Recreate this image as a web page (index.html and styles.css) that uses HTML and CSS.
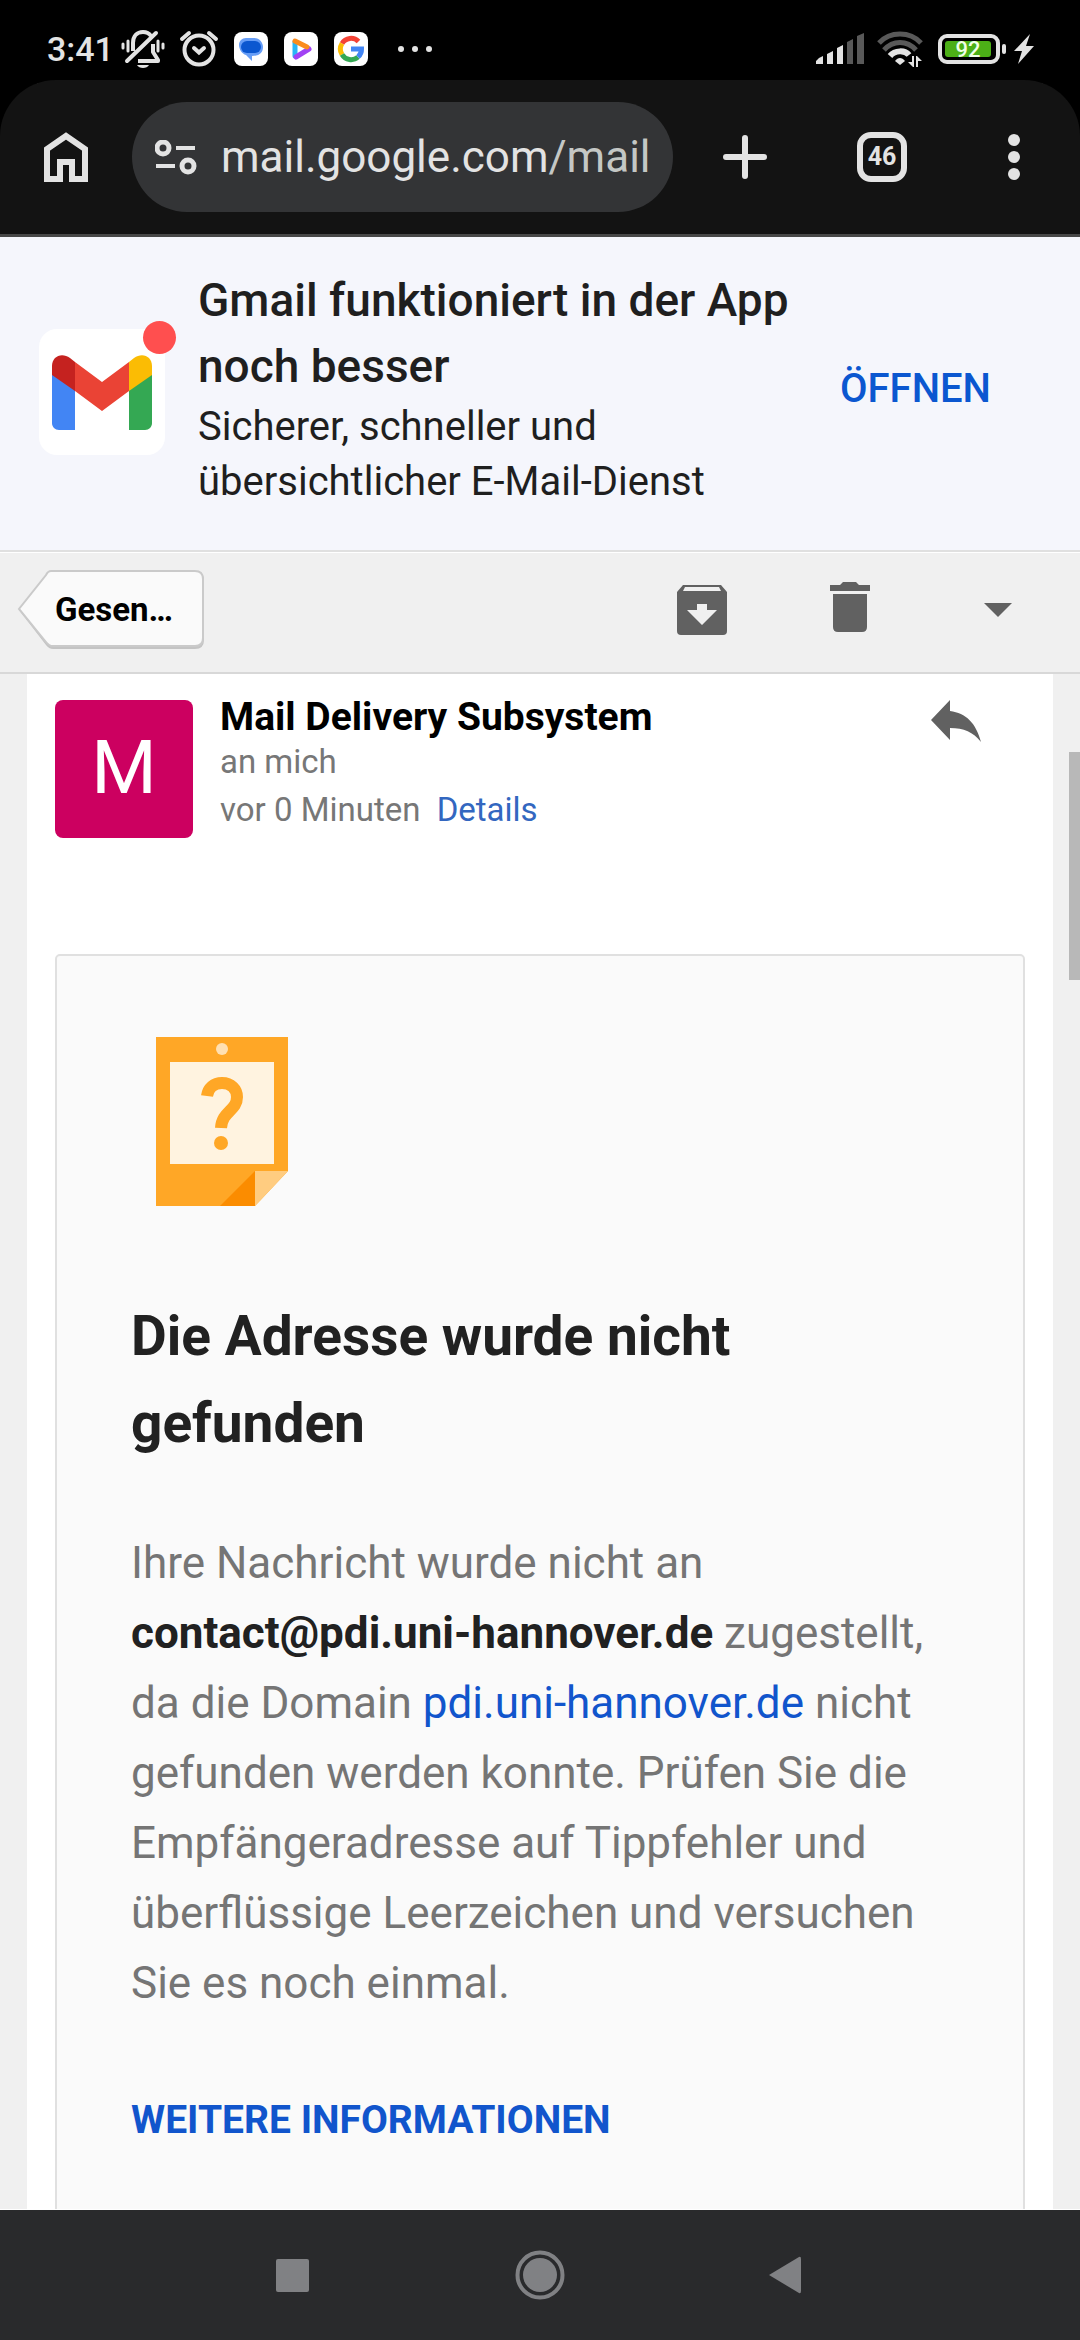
FILE: index.html
```html
<!doctype html>
<html lang="de">
    <head>
        <meta charset="UTF-8" />
        <meta name="viewport" content="width=device-width, initial-scale=1.0" />
        <title>Gmail - Die Adresse wurde nicht gefunden</title>
        <link rel="stylesheet" href="styles.css">
    </head>
    <body>
        <header class="status-bar">
            <span class="clock">3:41</span>
            <svg class="icon-bell" viewBox="0 0 44 38">
                <g fill="none" stroke="#e3e3e3" stroke-width="4">
                    <path d="M12 21 V13 C12 6 16 2 22 2 C25 2 28 3 30 6 M32 14 V22 L37 30 V31 H17" stroke-linejoin="round" />
                    <path d="M35 3 L6 31" stroke-linecap="round" />
                    <path d="M2 14 V18 M7 11 V21 M37 11 V21 M42 14 V18" stroke-width="3" stroke-linecap="round" />
                </g>
                <path d="M16 35 H28 C26 39 18 39 16 35Z" fill="#e3e3e3" />
            </svg>
            <svg class="icon-alarm" viewBox="0 0 40 38">
                <g fill="none" stroke="#e3e3e3" stroke-width="4" stroke-linecap="round">
                    <circle cx="20" cy="20" r="14.500" />
                    <path d="M3 9 L10 3 M37 9 L30 3 M15 18 L20 22.500 L25 18" />
                </g>
            </svg>
            <svg class="app-icon" viewBox="0 0 34 34">
                <rect width="34" height="34" rx="8" fill="#fff" />
                <path d="M12 6 H20 C26 6 29 11 29 15 C29 20 26 24 18 24 V29 L12 23 C8 22 5 17 5 13 C5 9 8 6 12 6Z" fill="#669df6" />
                <rect x="7" y="9" width="20" height="12" rx="6" fill="#0b57d0" />
            </svg>
            <svg class="app-icon" viewBox="0 0 34 34">
                <rect width="34" height="34" rx="8" fill="#fff" />
                <g fill="none" stroke-width="5" stroke-linecap="round">
                    <path d="M11 10 V24" stroke="#29b6f6" />
                    <path d="M12 25 L25 17" stroke="#a142f4" />
                    <path d="M11 9 L23 15" stroke="#fb8c1c" />
                </g>
            </svg>
            <svg class="app-icon" viewBox="0 0 34 34">
                <rect width="34" height="34" rx="8" fill="#fff" />
                <g fill="none" stroke-width="5">
                    <path d="M24.500 9.500 A10.500 10.500 0 0 0 8 11.500" stroke="#f44336" />
                    <path d="M8 11.500 A10.500 10.500 0 0 0 8 22.500" stroke="#fbbc04" />
                    <path d="M8 22.500 A10.500 10.500 0 0 0 24 25" stroke="#34a853" />
                    <path d="M24 25 A10.500 10.500 0 0 0 27.500 17 H17" stroke="#4285f4" />
                </g>
            </svg>
            <svg class="icon-more" viewBox="0 0 34 8" fill="#e3e3e3">
                <circle cx="3" cy="4" r="3" /><circle cx="17" cy="4" r="3" /><circle cx="31" cy="4" r="3" />
            </svg>
            <div class="status-right">
                <svg class="icon-signal" viewBox="0 0 48 32">
                    <path d="M0 31 V28 L3 25 L7 23 V31Z M11 31 V21 L17 18 V31Z M21 31 V15 L27 12 V31Z" fill="#e3e3e3" />
                    <path d="M31 31 V9 L37 6 V31Z M41 31 V3 L48 0 V31Z" fill="#595959" />
                </svg>
                <svg class="icon-wifi" viewBox="0 0 46 36">
                    <g fill="none" stroke-width="5">
                        <path d="M2 12 C13 0 33 0 44 12 M7 19 C16 9 30 9 39 19" stroke="#595959" />
                        <path d="M13 25 C18 19 28 19 32 24" stroke="#e3e3e3" stroke-width="6" />
                    </g>
                    <path d="M18 30 C21 26 25 26 28 30 L23 34Z M31 31 H35 V25 H37 V36 H36Z M39 36 V25 H40 L45 30 H41 V36Z" fill="#e3e3e3" />
                </svg>
                <div class="battery"><span class="battery-level">92</span></div>
                <svg class="icon-bolt" viewBox="0 0 20 30"><path d="M16 0 L0 17 H8 L4 30 L20 12 H12Z" fill="#e3e3e3" /></svg>
            </div>
        </header>

        <nav class="browser-bar">
            <button class="bar-button" aria-label="Startseite">
                <svg class="icon-home" viewBox="0 0 44 50">
                    <path d="M3 47 V17 L22 4 L41 17 V47 H28 V30 H16 V47Z" fill="none" stroke="#e3e3e3" stroke-width="6" />
                </svg>
            </button>
            <a class="url" href="#">
                <svg class="icon-tune" viewBox="0 0 42 35">
                    <g fill="none" stroke="#e3e3e3" stroke-width="5">
                        <circle cx="8" cy="8" r="6" /><circle cx="33" cy="26" r="6" />
                        <path d="M21 8 H40 M1 26 H20" stroke-width="4" />
                    </g>
                </svg>
                <span>mail.google.com<span class="url-path">/mail</span></span>
            </a>
            <button class="bar-button" aria-label="Neuer Tab">
                <svg class="icon-plus" viewBox="0 0 44 44">
                    <path d="M22 3 V41 M3 22 H41" stroke="#e3e3e3" stroke-width="6" stroke-linecap="round" />
                </svg>
            </button>
            <button class="bar-button"><span class="tab-count">46</span></button>
            <button class="bar-button" aria-label="Menü">
                <svg class="icon-menu" viewBox="0 0 12 46" fill="#e3e3e3">
                    <circle cx="6" cy="6" r="6" /><circle cx="6" cy="23" r="6" /><circle cx="6" cy="40" r="6" />
                </svg>
            </button>
        </nav>

        <section class="app-banner">
            <div class="gmail-icon">
                <svg class="gmail-logo" viewBox="0 0 100 75">
                    <path d="M0 18 L23 35 V75 H7 C3 75 0 72 0 68Z" fill="#4285f4" />
                    <path d="M100 18 L77 35 V75 H93 C97 75 100 72 100 68Z" fill="#34a853" />
                    <path d="M23 7 L50 27 L77 7 V36 L50 56 L23 36Z" fill="#ea4335" />
                    <path d="M0 20 V11 C0 1 10 -3 18 3 L23 7 V36Z" fill="#c5221f" />
                    <path d="M100 20 V11 C100 1 90 -3 82 3 L77 7 V36Z" fill="#fbbc04" />
                </svg>
                <span class="badge"></span>
            </div>
            <div class="banner-text">
                <h2>Gmail funktioniert in der App noch besser</h2>
                <p>Sicherer, schneller und übersichtlicher E-Mail-Dienst</p>
            </div>
            <a class="open-link" href="#">ÖFFNEN</a>
        </section>

        <div class="mail-bar">
            <button class="back-button">
                <svg class="back-shape" viewBox="0 0 188 82">
                    <path d="M34 3 H178 Q187 3 187 11 V71 Q187 80 178 80 H36 Q32 80 29 76 L2 41 L29 7 Q31 3 34 3Z" fill="#c4c4c4" />
                    <path d="M34 2 H178 Q186 2 186 10 V69 Q186 77 178 77 H36 Q32 77 29 73 L2 40 L29 6 Q31 2 34 2Z" fill="#fafafa" stroke="#cacaca" stroke-width="2" />
                </svg>
                <span class="back-label">Gesen…</span>
            </button>
            <button class="mail-action" aria-label="Archivieren">
                <svg class="icon-archive" viewBox="0 0 50 50">
                    <path d="M6 0 H44 L50 7 V46 Q50 50 46 50 H4 Q0 50 0 46 V7Z" fill="#616161" />
                    <path d="M8 2 H42 L44 6 H6Z M20 19 H30 V25 H40 L25 40 L10 25 H20Z" fill="#f0f0f0" />
                </svg>
            </button>
            <button class="mail-action" aria-label="Löschen">
                <svg class="icon-trash" viewBox="0 0 40 56">
                    <path d="M0 3 H10 L13 0 H26 L29 3 H40 V9 H0Z M3 12 H37 V45 Q37 50 32 50 H8 Q3 50 3 45Z" fill="#616161" />
                </svg>
            </button>
            <button class="mail-action" aria-label="Mehr">
                <svg class="icon-caret" viewBox="0 0 28 14"><path d="M0 0 H28 L14 14Z" fill="#616161" /></svg>
            </button>
        </div>

        <main class="message">
            <div class="message-page">
                <div class="sender">
                    <div class="avatar">M</div>
                    <div class="sender-info">
                        <h3>Mail Delivery Subsystem</h3>
                        <p class="recipient">an mich</p>
                        <p class="sent">vor 0 Minuten <a class="details" href="#">Details</a></p>
                    </div>
                    <button class="reply" aria-label="Antworten">
                        <svg class="icon-reply" viewBox="0 0 50 42">
                            <path d="M0 20 L19 0 V11 C35 13 45 23 50 42 C42 32 33 28 19 28 V40Z" fill="#616161" />
                        </svg>
                    </button>
                </div>

                <article class="card">
                    <svg class="icon-note" viewBox="0 0 132 169">
                        <path d="M0 0 H132 V134 L99 169 H0Z" fill="#ffa726" />
                        <circle cx="66" cy="12" r="6" fill="#ffe0b2" />
                        <rect x="14" y="25" width="104" height="102" fill="#fff3e0" />
                        <path d="M51 59 C52 51 58 46 66 46 C75 46 81 52 81 60 C81 74 66 74 65 91" fill="none" stroke="#ffa726" stroke-width="12" />
                        <circle cx="65" cy="106" r="7" fill="#ffa726" />
                        <path d="M64 169 L99 134 V169Z" fill="#fb8c00" />
                        <path d="M99 134 H132 L99 169Z" fill="#ffcc80" />
                    </svg>
                    <h1>Die Adresse wurde nicht gefunden</h1>
                    <p class="body-text">Ihre Nachricht wurde nicht an <strong>contact@pdi.uni-hannover.de</strong> zugestellt, da die Domain <a href="#">pdi.uni-hannover.de</a> nicht gefunden werden konnte. Prüfen Sie die Empfängeradresse auf Tippfehler und überflüssige Leerzeichen und versuchen Sie es noch einmal.</p>
                    <a class="more-info" href="#">WEITERE INFORMATIONEN</a>
                </article>
            </div>
            <span class="scroll-thumb"></span>
        </main>

        <footer class="nav-bar">
            <button class="nav-button" aria-label="Letzte Apps">
                <svg class="nav-icon" viewBox="0 0 50 50"><rect x="9" y="9" width="33" height="33" rx="2" fill="#808184" /></svg>
            </button>
            <button class="nav-button" aria-label="Home">
                <svg class="nav-icon" viewBox="0 0 50 50">
                    <circle cx="25" cy="25" r="22.500" fill="none" stroke="#808184" stroke-width="4" />
                    <circle cx="25" cy="25" r="17" fill="#808184" />
                </svg>
            </button>
            <button class="nav-button" aria-label="Zurück">
                <svg class="nav-icon" viewBox="0 0 50 50"><path d="M6 25 L36 7 Q38 6 38 9 V41 Q38 44 36 43Z" fill="#808184" /></svg>
            </button>
        </footer>
    </body>
</html>
```
FILE: styles.css
```css
* {
    margin: 0;
    padding: 0;
    box-sizing: border-box;
}

body {
    font-family: Roboto, sans-serif;
    background: #f0f0f0;
    height: 100vh;
    display: flex;
    flex-direction: column;
    overflow: hidden;
}

button {
    font-family: inherit;
    background: none;
    border: none;
}

a {
    color: #1155cc;
    text-decoration: none;
}

svg {
    display: block;
    flex-shrink: 0;
}

/* Status bar */
.status-bar {
    height: 80px;
    flex-shrink: 0;
    padding: 18px 46px 0 47px;
    display: flex;
    align-items: center;
    background: #000;
    color: #e3e3e3;
}

.clock {
    width: 74px;
    font-size: 34px;
    font-weight: 500;
}

.icon-bell {
    width: 44px;
    height: 38px;
    margin-right: 14px;
}

.icon-alarm {
    width: 40px;
    height: 38px;
    margin-right: 15px;
}

.app-icon {
    width: 34px;
    height: 34px;
    margin-right: 16px;
}

.icon-more {
    width: 34px;
    height: 8px;
    margin-left: 14px;
}

.status-right {
    margin-left: auto;
    display: flex;
    align-items: center;
}

.icon-signal {
    width: 48px;
    height: 32px;
    margin-right: 13px;
}

.icon-wifi {
    width: 46px;
    height: 36px;
    margin-right: 15px;
}

.battery {
    position: relative;
    width: 62px;
    height: 30px;
    padding: 3px;
    margin-right: 14px;
    border: 4px solid #e3e3e3;
    border-radius: 9px;
}

.battery::after {
    content: "";
    position: absolute;
    right: -10px;
    top: 6px;
    width: 4px;
    height: 10px;
    border-radius: 2px;
    background: #e3e3e3;
}

.battery-level {
    display: block;
    width: 46px;
    height: 16px;
    border-radius: 3px;
    background: #4caf17;
    color: #f0ffe8;
    font-size: 22px;
    font-weight: 500;
    line-height: 18px;
    text-align: center;
}

.icon-bolt {
    width: 20px;
    height: 30px;
}

/* Browser toolbar */
.browser-bar {
    flex-shrink: 0;
    height: 157px;
    padding-top: 22px;
    display: grid;
    grid-template-columns: 132px 1fr 143px 132px 132px;
    align-items: start;
    background: #131313;
    border-bottom: 3px solid #474747;
    border-radius: 56px 56px 0 0;
    box-shadow: 0 -60px 0 60px #000;
    clip-path: inset(0);
}

.bar-button {
    height: 110px;
    display: flex;
    align-items: center;
    justify-content: center;
}

.icon-home {
    width: 44px;
    height: 50px;
}

.url {
    height: 110px;
    padding-left: 23px;
    display: flex;
    align-items: center;
    gap: 24px;
    border-radius: 55px;
    background: #333436;
    color: #e3e3e3;
    font-size: 44px;
    white-space: nowrap;
}

.url-path {
    color: #c4c7c5;
}

.icon-tune {
    width: 42px;
    height: 35px;
}

.icon-plus {
    width: 44px;
    height: 44px;
}

.tab-count {
    width: 50px;
    height: 50px;
    border: 6px solid #e3e3e3;
    border-radius: 14px;
    color: #e3e3e3;
    font-size: 25px;
    font-weight: 700;
    line-height: 38px;
}

.icon-menu {
    width: 12px;
    height: 46px;
}

/* App banner */
.app-banner {
    flex-shrink: 0;
    padding: 30px 89px 41px 39px;
    display: flex;
    align-items: center;
    background: #f5f6fc;
    border-bottom: 2px solid #e0e0e0;
    font-family: "Google Sans", Roboto, sans-serif;
}

.gmail-icon {
    position: relative;
    width: 126px;
    height: 126px;
    margin: 8px 33px 0 0;
    display: flex;
    align-items: center;
    justify-content: center;
    background: #fff;
    border-radius: 18px;
}

.gmail-logo {
    width: 100px;
    height: 75px;
}

.badge {
    position: absolute;
    top: -8px;
    right: -11px;
    width: 33px;
    height: 33px;
    border-radius: 50%;
    background: #ff4f4f;
}

.banner-text {
    flex: 1;
    padding-right: 16px;
    color: #1f1f1f;
}

.banner-text h2 {
    font-size: 46px;
    font-weight: 500;
    line-height: 66px;
}

.banner-text p {
    font-size: 40px;
    line-height: 55px;
}

.open-link {
    color: #0b57d0;
    font-size: 40px;
    font-weight: 500;
}

/* Mail toolbar */
.mail-bar {
    flex-shrink: 0;
    height: 122px;
    padding: 0 8px 6px 17px;
    display: flex;
    align-items: center;
    border-top: 1px solid #fff;
    border-bottom: 2px solid #d8d8d8;
}

.back-button {
    position: relative;
    width: 188px;
    height: 82px;
    margin-right: auto;
    padding: 0 32px 0 38px;
}

.back-shape {
    position: absolute;
    inset: 0;
}

.back-label {
    position: relative;
    display: block;
    font-size: 33px;
    font-weight: 700;
    color: #000;
}

.mail-action {
    width: 148px;
    height: 82px;
    display: flex;
    align-items: center;
    justify-content: center;
}

.icon-archive {
    width: 50px;
    height: 50px;
}

.icon-trash {
    width: 40px;
    height: 56px;
}

.icon-caret {
    width: 28px;
    height: 14px;
}

/* Message */
.message {
    position: relative;
    flex: 1;
    min-height: 0;
    padding: 0 27px;
    overflow: hidden;
}

.message-page {
    padding: 0 28px;
    background: #fff;
}

.sender {
    height: 280px;
    padding: 26px 44px 0 0;
    display: flex;
    align-items: flex-start;
}

.avatar {
    width: 138px;
    height: 138px;
    margin-right: 27px;
    border-radius: 8px;
    background: #cc0060;
    color: #fff;
    font-size: 75px;
    line-height: 134px;
    text-align: center;
}

.sender-info {
    flex: 1;
    color: #777;
    font-size: 33px;
    line-height: 48px;
}

.sender-info h3 {
    margin-bottom: 4px;
    color: #000;
    font-size: 39px;
    line-height: 34px;
}

.details {
    margin-left: 8px;
    color: #3367c0;
}

.reply {
    width: 50px;
}

.icon-reply {
    width: 50px;
    height: 42px;
}

.card {
    padding: 81px 74px 240px;
    background: #fafafa;
    border: 2px solid #e0e0e0;
    border-radius: 5px;
}

.icon-note {
    width: 132px;
    height: 169px;
    margin-left: 25px;
}

.card h1 {
    margin-top: 87px;
    color: #212121;
    font-size: 55px;
    line-height: 87px;
}

.body-text {
    margin-top: 61px;
    color: #757575;
    font-size: 44px;
    line-height: 70px;
}

.body-text strong {
    color: #212121;
}

.more-info {
    display: block;
    margin-top: 69px;
    font-size: 39px;
    font-weight: 700;
    line-height: 66px;
}

.scroll-thumb {
    position: absolute;
    top: 78px;
    right: 0;
    width: 11px;
    height: 228px;
    background: #b8b8b8;
}

/* Android navigation */
.nav-bar {
    flex-shrink: 0;
    height: 131px;
    padding: 0 168px;
    display: grid;
    grid-template-columns: repeat(3, 1fr);
    border-top: 1px solid #fff;
    background: #292a2c;
}

.nav-button {
    display: flex;
    align-items: center;
    justify-content: center;
}

.nav-icon {
    width: 50px;
    height: 50px;
}
```
